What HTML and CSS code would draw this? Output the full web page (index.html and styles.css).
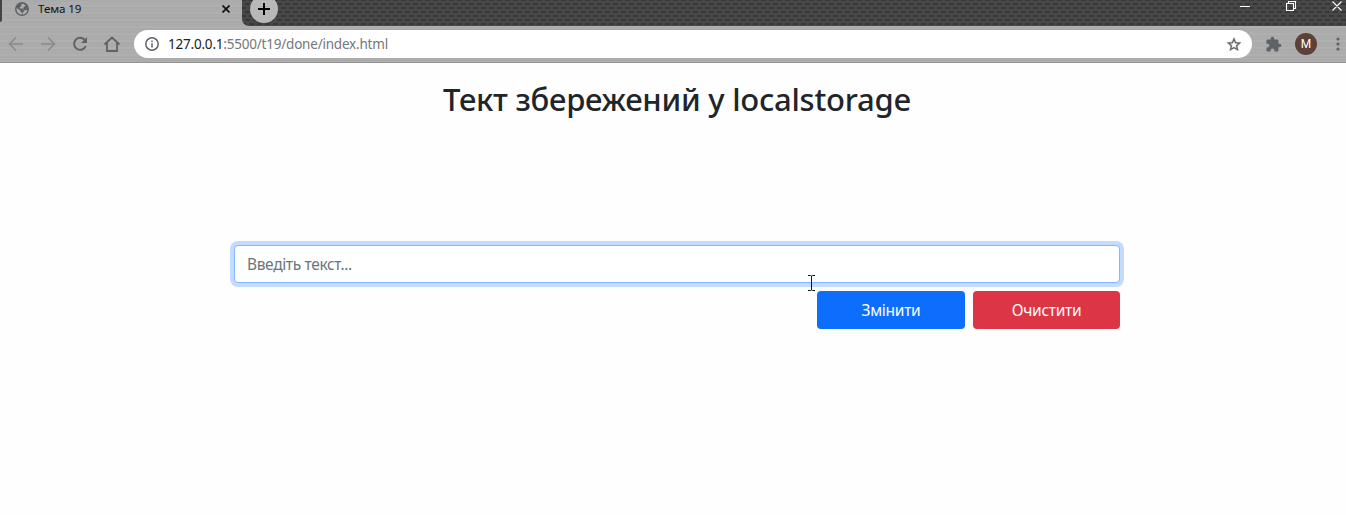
FILE: index.html
```html
<!DOCTYPE html>
<html lang="uk">
<head>
<meta charset="utf-8">
<title>Тема 19</title>
<link rel="stylesheet" href="styles.css">
</head>
<body>
<header class="browser">
  <div class="tabs">
    <div class="sliver"></div>
    <div class="tab">
      <svg class="globe" width="14" height="14" viewBox="0 0 14 14"><circle cx="7" cy="7" r="7" fill="#5f6368"/><path d="M8.300 1.700 5.900 2.800 6.600 4.300 4.800 5.200 4.800 6.600H8L8.700 8.400 12.400 8A5.500 5.500 0 0 1 7 12.500V11L5.500 9.800V8.700L1.600 6A5.500 5.500 0 0 0 5.500 12.300L7.500 12.500 7.600 10.400 9.300 9.500 8.300 6.400 8.800 4.800 10.800 3.800Z" fill="#b0b0b0"/></svg>
      <span class="tab-title">Тема 19</span>
      <svg class="close" width="8" height="8" viewBox="0 0 8 8"><path d="M.5.5l7 7M7.500.5l-7 7" stroke="#111" stroke-width="1.700"/></svg>
    </div>
    <div class="strip">
      <div class="plus"><svg width="12" height="12" viewBox="0 0 12 12"><path d="M6 0v12M0 6h12" stroke="#000" stroke-width="2"/></svg></div>
      <svg class="window-controls" width="106" height="12" viewBox="0 0 106 12" fill="none" stroke="#fff"><path d="M0 6.500h10M46.500 3.500h7v7h-7zM48.500 3.500v-2h7v7h-2M92.500 1.500l9 9M101.500 1.500l-9 9" stroke-width="1.100"/></svg>
    </div>
  </div>
  <div class="toolbar">
    <svg class="nav" width="126" height="20" viewBox="0 0 126 20" fill="none" stroke-width="1.800"><path d="M23 10H10M16 3.500 9.500 10l6.500 6.500M41 10h13M48 3.500l6.500 6.500-6.500 6.500" stroke="#898b8d" stroke-width="1.600"/><path d="M84.500 5.700A6 6 0 1 0 85.700 12" stroke="#5f6368" stroke-width="2"/><path d="M87 3v6h-6z" fill="#5f6368"/><path d="M104.500 10.500 112 3.500l7.500 7M107 9v8h10V9" stroke="#5f6368"/></svg>
    <div class="address">
      <svg class="info" width="14" height="14" viewBox="0 0 14 14" fill="none" stroke="#5f6368" stroke-width="1.500"><circle cx="7" cy="7" r="6.200"/><path d="M7 6.200v4.200M7 3.500v1.500"/></svg>
      <span class="url"><span class="host">127.0.0.1</span>:5500/t19/done/index.html</span>
      <svg class="star" width="14" height="14" viewBox="0 0 24 24"><path d="M22 9.240l-7.190-.62L12 2 9.190 8.630 2 9.240l5.460 4.730L5.820 21 12 17.270 18.180 21l-1.630-7.030L22 9.240zM12 15.400l-3.760 2.270 1-4.280-3.320-2.880 4.380-.38L12 6.100l1.710 4.040 4.380.38-3.320 2.880 1 4.280L12 15.400z" fill="#5f6368" stroke="#5f6368" stroke-width=".5" transform="translate(-2.400 -1.500) scale(1.200)"/></svg>
    </div>
    <svg class="puzzle" width="17" height="17" viewBox="0 0 24 24"><path fill="#5f6368" d="M20.500 11H19V7c0-1.100-.9-2-2-2h-4V3.500a2.500 2.500 0 0 0-5 0V5H4c-1.100 0-1.990.9-1.990 2v3.800H3.500c1.490 0 2.700 1.210 2.700 2.700s-1.210 2.700-2.700 2.700H2V20c0 1.100.9 2 2 2h3.800v-1.500c0-1.490 1.210-2.700 2.700-2.700s2.700 1.210 2.700 2.700V22H17c1.100 0 2-.9 2-2v-4h1.500a2.500 2.500 0 0 0 0-5z"/></svg>
    <span class="avatar">M</span>
    <svg class="menu" width="4" height="14" viewBox="0 0 4 14" fill="#5f6368"><circle cx="2" cy="2" r="1.600"/><circle cx="2" cy="7" r="1.600"/><circle cx="2" cy="12" r="1.600"/></svg>
  </div>
</header>
<main class="page">
  <h1 class="heading">Тект збережений у localstorage</h1>
  <input class="field" type="text" placeholder="Введіть текст...">
  <div class="actions">
    <button class="btn primary">Змінити</button>
    <button class="btn danger">Очистити</button>
  </div>
</main>
<svg class="cursor" width="9" height="16" viewBox="0 0 9 16" fill="none" stroke="#111"><path d="M1 .5h2.500l1 .5 1-.5H8M1 15.500h2.500l1-.5 1 .5H8M4.500 1v14"/></svg>
</body>
</html>
```
FILE: styles.css
```css
* { box-sizing: border-box; }
body { margin: 0; height: 515px; overflow: hidden; background: #fefefe; font-family: "Noto Sans", sans-serif; color: #212529; }
svg { display: block; flex: none; }
.browser { height: 63px; border-bottom: 1px solid #929292; background: repeating-linear-gradient(#aaa 0 2px, #adadad 2px 3px, #ababab 3px 5px, #afafaf 5px 7px); }
.tabs { height: 26px; display: flex; align-items: flex-start; }
.sliver { width: 2px; height: 22px; background: #444; border-radius: 0 0 2px 0; }
.tab { width: 240px; height: 26px; padding: 0 12px 8px 13px; display: flex; align-items: center; }
.tab-title { margin-left: 9px; flex: 1; font-size: 11.6px; line-height: 18px; letter-spacing: -.1px; color: #111; }
/* Woven dark title strip */
.strip {
  flex: 1; height: 26px; display: flex; align-items: flex-start;
  border-radius: 0 0 0 7px;
  background-color: #484848;
  background-image:
    conic-gradient(from 90deg at 3px 6px, #373737 25%, transparent 0),
    conic-gradient(from 90deg at 3px 6px, #373737 25%, transparent 0);
  background-size: 8px 8px;
  background-position: 0 -3px, 4px 1px;
}
.plus { width: 28px; height: 28px; margin: -5px 0 0 8px; display: grid; place-items: center; border-radius: 50%; background: #b8b8b8; }
.window-controls { margin-left: auto; }
.toolbar { height: 36px; display: flex; align-items: center; padding-right: 6px; }
.address { flex: none; margin-left: 8px; width: 1118px; height: 28px; padding: 0 11px; display: flex; align-items: center; border-radius: 14px; background: #fff; }
.url { margin-left: 9px; flex: 1; font-size: 13.5px; line-height: 20px; color: #73777b; letter-spacing: -.21px; }
.host { color: #202124; }
.puzzle { margin-left: 13px; }
.avatar { width: 22px; height: 22px; margin-left: 13px; border-radius: 50%; background: #5d4037; color: #fff; font: 12px/22px Roboto, sans-serif; text-align: center; }
.menu { margin-left: 19px; }
.page { width: 886px; margin: 0 0 0 234px; padding-top: 17px; }
.heading { margin: 0 0 127px; text-align: center; font-size: 31px; line-height: 38px; font-weight: 500; letter-spacing: -.25px; white-space: nowrap; }
.field { display: block; width: 100%; height: 38px; padding: 6px 12px; border: 1px solid #86b7fe; border-radius: 4px; outline: 0; background: #fff; box-shadow: 0 0 0 4px #c2dbfe; font: 15.5px/24px "Noto Sans", sans-serif; letter-spacing: -.35px; }
.field::placeholder { color: #6c757d; opacity: 1; }
.actions { display: flex; justify-content: flex-end; gap: 8px; margin-top: 8px; }
.btn { height: 38px; padding: 0; border: 0; border-radius: 4px; color: #fff; font: 15.5px/24px "Noto Sans", sans-serif; letter-spacing: -.28px; }
.primary { width: 148px; background: #0d6efd; }
.danger { width: 147px; background: #dc3545; }
.cursor { position: absolute; left: 807px; top: 275px; }
```
